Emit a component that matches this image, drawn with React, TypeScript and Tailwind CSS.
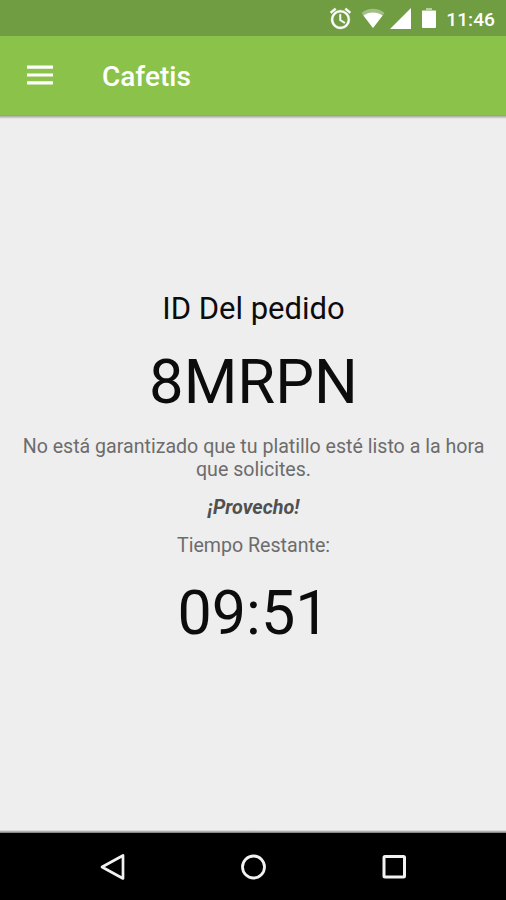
import React from 'react';

const StatusBar: React.FC = () => (
  <div className="flex h-9 items-center justify-end bg-[#709c42] pr-[11px] text-white">
    <svg className="mr-[8px] h-[25px] w-[25px]" viewBox="0 0 24 24" fill="currentColor" stroke="currentColor" strokeWidth="0.4">
      <path d="M22 5.72l-4.6-3.86-1.29 1.53 4.6 3.86L22 5.72zM7.88 3.39L6.6 1.86 2 5.71l1.29 1.53 4.59-3.85zM12.5 8H11v6l4.75 2.85.75-1.23-4-2.37V8zM12 4c-4.97 0-9 4.03-9 9s4.02 9 9 9a9 9 0 0 0 0-18zm0 16c-3.87 0-7-3.13-7-7s3.13-7 7-7 7 3.13 7 7-3.13 7-7 7z" />
    </svg>
    <svg className="mr-[5px] h-[20px] w-[24px]" viewBox="0 0 24 20">
      <path d="M12 20L0.5 5C4 2.2 8 0.8 12 0.8S20 2.2 23.5 5Z" fill="#fff" fillOpacity="0.35" />
      <path d="M12 20L2.4 7.5C5 5.4 8.5 4.4 12 4.4S19 5.4 21.6 7.5Z" fill="#fff" />
    </svg>
    <svg className="mr-[11px] h-[21px] w-[21px]" viewBox="0 0 20 20" fill="currentColor">
      <path d="M0 20L20 0V20Z" />
    </svg>
    <svg className="mr-[10px] h-[20px] w-[14px]" viewBox="0 0 14 20">
      <path d="M4 0h6v2h3a1 1 0 0 1 1 1H0a1 1 0 0 1 1-1h3Z" fill="#fff" fillOpacity="0.5" />
      <path d="M0 3h14v16a1 1 0 0 1-1 1H1a1 1 0 0 1-1-1Z" fill="#fff" />
    </svg>
    <span className="pt-[3px] text-[19.2px] leading-none font-medium">11:46</span>
  </div>
);

const Toolbar: React.FC = () => (
  <header className="flex h-[79px] items-center bg-[#8bc34a] pl-[27px] text-white">
    <svg className="mb-[2px] h-[20px] w-[26px]" viewBox="0 0 26 20" fill="currentColor">
      <path d="M0 0.5h26v3.2H0zM0 8.4h26v3.2H0zM0 16.2h26v3.2H0z" />
    </svg>
    <h1 className="ml-[49px] pt-[2px] text-[28px] leading-none font-medium">Cafetis</h1>
  </header>
);

const NavigationBar: React.FC = () => (
  <nav className="flex h-[67px] items-center justify-center gap-[112px] bg-black text-[#f2f2f2]">
    <svg className="h-7 w-7" viewBox="0 0 28 28" fill="none" stroke="currentColor" strokeWidth="2.7">
      <path d="M24 2.5V25.5L3 14Z" strokeLinejoin="round" />
    </svg>
    <svg className="h-7 w-7" viewBox="0 0 28 28" fill="none" stroke="currentColor" strokeWidth="2.8">
      <circle cx="14.5" cy="14" r="11" />
    </svg>
    <svg className="h-7 w-7" viewBox="0 0 28 28" fill="none" stroke="currentColor" strokeWidth="3">
      <rect x="5" y="3.5" width="20.5" height="20.5" rx="1" />
    </svg>
  </nav>
);

const App: React.FC = () => {
  return (
    <div className="flex h-[900px] w-[506px] flex-col overflow-hidden bg-[#eeeeee] font-[Roboto,sans-serif]">
      <StatusBar />
      <Toolbar />
      <div className="h-[4px] shrink-0 bg-linear-to-b from-[#919391] to-[#eeeeee]" />
      <main className="flex flex-1 flex-col items-center pt-[171px] pl-px text-center text-[#6c6c6c]">
        <h2 className="text-[31px] leading-[38px] text-[#0c0c0c]">ID Del pedido</h2>
        <p className="mt-[17px] text-[61.5px] leading-[74px] text-[#0c0c0c]">8MRPN</p>
        <p className="mt-[16px] w-[480px] text-[19.6px] leading-[23px]">
          No está garantizado que tu platillo esté listo a la hora que solicites.
        </p>
        <p className="mt-[15px] text-[19.8px] leading-[23px] font-bold italic text-[#505050]">¡Provecho!</p>
        <p className="mt-[15px] text-[19.6px] leading-[23px]">Tiempo Restante:</p>
        <p className="mt-[19px] text-[61px] leading-[74px] text-[#0c0c0c]">09:51</p>
      </main>
      <div className="h-[3px] shrink-0 bg-linear-to-b from-[#eeeeee] to-[#777777]" />
      <NavigationBar />
    </div>
  );
};

export default App;
